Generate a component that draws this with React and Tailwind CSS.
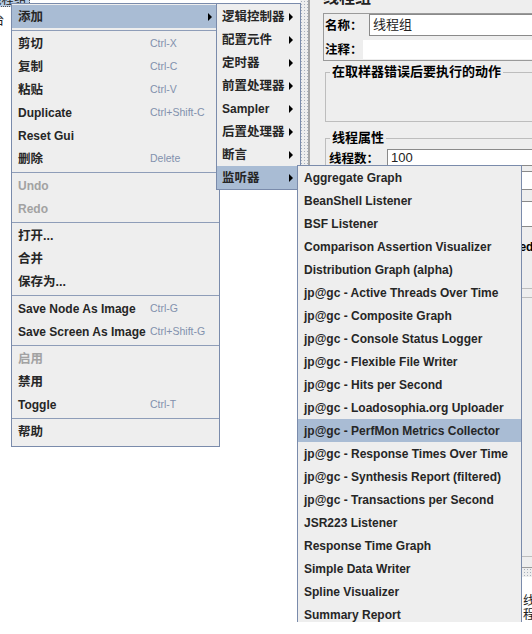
import clsx from "clsx";

const CJK = /[\u4e00-\u9fff]/;

const mainItems = [
  { label: "添加", arrow: true, active: true },
  "sep",
  { label: "剪切", shortcut: "Ctrl-X" },
  { label: "复制", shortcut: "Ctrl-C" },
  { label: "粘贴", shortcut: "Ctrl-V" },
  { label: "Duplicate", shortcut: "Ctrl+Shift-C" },
  { label: "Reset Gui" },
  { label: "删除", shortcut: "Delete" },
  "sep",
  { label: "Undo", disabled: true },
  { label: "Redo", disabled: true },
  "sep",
  { label: "打开..." },
  { label: "合并" },
  { label: "保存为..." },
  "sep",
  { label: "Save Node As Image", shortcut: "Ctrl-G" },
  { label: "Save Screen As Image", shortcut: "Ctrl+Shift-G" },
  "sep",
  { label: "启用", disabled: true },
  { label: "禁用" },
  { label: "Toggle", shortcut: "Ctrl-T" },
  "sep",
  { label: "帮助" },
];

const addItems = [
  "逻辑控制器",
  "配置元件",
  "定时器",
  "前置处理器",
  "Sampler",
  "后置处理器",
  "断言",
  "监听器",
];

const listeners = [
  "Aggregate Graph",
  "BeanShell Listener",
  "BSF Listener",
  "Comparison Assertion Visualizer",
  "Distribution Graph (alpha)",
  "jp@gc - Active Threads Over Time",
  "jp@gc - Composite Graph",
  "jp@gc - Console Status Logger",
  "jp@gc - Flexible File Writer",
  "jp@gc - Hits per Second",
  "jp@gc - Loadosophia.org Uploader",
  "jp@gc - PerfMon Metrics Collector",
  "jp@gc - Response Times Over Time",
  "jp@gc - Synthesis Report (filtered)",
  "jp@gc - Transactions per Second",
  "JSR223 Listener",
  "Response Time Graph",
  "Simple Data Writer",
  "Spline Visualizer",
  "Summary Report",
];

// small black triangle used for submenu arrows
const Arrow = () => (
  <span className="h-0 w-0 border-y-[4px] border-l-[4px] border-y-transparent border-l-black" />
);

// chinese labels sit a touch lower and a bit larger than the latin ones
const labelSize = (text) =>
  CJK.test(text) ? "relative top-px text-[12.5px]" : "text-[12px]";

const Separator = () => (
  <div className="flex h-[4px] items-center">
    <div className="h-px w-full bg-[#8e9db8]" />
  </div>
);

const MainMenu = () => (
  <div className="absolute left-[11px] top-[3px] w-[209px] border border-[#7a8bab] bg-[#eeeeee] pb-[3px] pt-px">
    {mainItems.map((item, i) =>
      item === "sep" ? (
        <Separator key={i} />
      ) : (
        <div
          key={i}
          className={clsx(
            "flex h-[23px] items-center pl-[6px] pr-[7px]",
            item.active && "bg-[#a9bcd4]"
          )}
        >
          <span
            className={clsx(
              "w-[132px] shrink-0 whitespace-nowrap font-bold",
              labelSize(item.label),
              item.disabled ? "text-[#a2a2a2]" : "text-[#262626]"
            )}
          >
            {item.label}
          </span>
          {item.shortcut && (
            <span className="whitespace-nowrap text-[10.5px] text-[#8291ad]">
              {item.shortcut}
            </span>
          )}
          {item.arrow && (
            <span className="ml-auto flex">
              <Arrow />
            </span>
          )}
        </div>
      )
    )}
  </div>
);

const AddMenu = () => (
  <div className="absolute left-[216px] top-[3px] w-[85px] border border-[#7a8bab] bg-[#eeeeee] pt-px">
    {addItems.map((label) => (
      <div
        key={label}
        className={clsx(
          "flex h-[23px] items-center pl-[5px] pr-[7px]",
          label === "监听器" && "bg-[#a9bcd4]"
        )}
      >
        <span
          className={clsx(
            "whitespace-nowrap font-bold text-[#262626]",
            labelSize(label)
          )}
        >
          {label}
        </span>
        <span className="ml-auto flex">
          <Arrow />
        </span>
      </div>
    ))}
  </div>
);

const ListenerMenu = () => (
  <div className="absolute left-[297px] top-[165px] w-[225px] border border-[#7a8bab] bg-[#eeeeee]">
    {listeners.map((label) => (
      <div
        key={label}
        className={clsx(
          "flex h-[23px] items-center pl-[6px]",
          label === "jp@gc - PerfMon Metrics Collector" && "bg-[#a9bcd4]"
        )}
      >
        <span className="whitespace-nowrap text-[12px] font-bold text-[#262626]">
          {label}
        </span>
      </div>
    ))}
  </div>
);

const Field = ({ className, children }) => (
  <div
    className={clsx(
      "flex flex-1 items-center border border-[#8a8a8a] bg-white pl-[3px] text-[13px] text-[#222]",
      className
    )}
  >
    {children}
  </div>
);

const ThreadGroupPanel = () => (
  <div className="flex flex-1 flex-col overflow-hidden bg-[#eeeeee]">
    <div className="h-[572px] pl-[13px]">
      <div className="-mt-[12px] h-[25px] text-[16px] font-bold leading-[20px] text-[#222]">
        线程组
      </div>

      {/* name / comment */}
      <div className="h-[48px] w-[260px] border border-[#9a9a9a]">
        <div className="flex h-[22px] items-center">
          <span className="w-[45px] pl-px pt-[3px] text-[12.5px] font-bold">名称：</span>
          <Field className="h-[22px] -mt-px">线程组</Field>
        </div>
        <div className="mt-[4px] flex h-[19px] items-center">
          <span className="w-[39px] pl-px pt-[2px] text-[12.5px] font-bold">注释：</span>
          <div className="h-[19px] flex-1 bg-white" />
        </div>
      </div>

      {/* on sampler error */}
      <div className="relative ml-[2px] mt-[11px] h-[50px] w-[260px] border border-[#bdbdbd]">
        <span className="absolute -top-[10px] left-[4px] bg-[#eeeeee] px-[2px] text-[13px] font-bold leading-[18px]">
          在取样器错误后要执行的动作
        </span>
      </div>

      {/* thread properties */}
      <div className="relative ml-[2px] mt-[16px] w-[260px] border border-[#bdbdbd] pb-[10px] pl-[3px] pt-[10px]">
        <span className="absolute -top-[10px] left-[4px] bg-[#eeeeee] px-[2px] text-[13px] font-bold leading-[18px]">
          线程属性
        </span>
        <div className="flex h-[17px] items-center">
          <span className="w-[58px] pt-[3px] text-[12.5px] font-bold">线程数：</span>
          <Field className="h-[17px]">100</Field>
        </div>
        <div className="mt-[5px] flex h-[19px] items-center">
          <span className="w-[120px]" />
          <Field className="h-[19px]" />
        </div>
        <div className="mt-[11px] flex h-[26px] items-center">
          <span className="w-[120px]" />
          <Field className="h-[26px]" />
        </div>
        <div className="mt-[11px] whitespace-nowrap pl-[5px] text-[12px] font-bold">
          Delay Thread creation until needed
        </div>
        <div className="h-[22px]" />
      </div>

      <div className="ml-[2px] mt-[8px] h-[260px] w-[260px] border border-[#bdbdbd]" />
    </div>
    <div className="h-[10px] border-t border-[#9a9a9a] bg-[#eeeeee] bg-[radial-gradient(#a8b0bc_0.8px,transparent_0.8px)] bg-[length:3px_3px]" />
    <div className="flex-1 bg-white pl-[213px] pt-[17px] text-[12.5px] leading-[14px] text-[#222]">
      线程
    </div>
  </div>
);

export default function App() {
  return (
    <div className="relative h-[634px] w-[532px] overflow-hidden bg-white font-['Liberation_Sans','Noto_Sans_CJK_SC',sans-serif]">
      <div className="relative h-[622px] overflow-hidden">
        <div className="flex h-full">
          {/* tree */}
          <div className="relative w-[300px] bg-white">
            <div className="absolute -left-[14px] -top-[7px] border border-dotted border-[#555] bg-[#b8cce4] px-[2px] text-[12.5px] leading-[12px] text-[#222]">
              线程组
            </div>
            <div className="absolute -left-[8px] top-[12px] text-[12.5px] text-[#222]">
              台
            </div>
          </div>
          {/* splitter */}
          <div className="w-[8px] bg-[#eeeeee] bg-[radial-gradient(#a8b0bc_0.8px,transparent_0.8px)] bg-[length:3px_3px]" />
          <div className="w-[2px] bg-[#a6a6a6]" />
          <ThreadGroupPanel />
        </div>

        <MainMenu />
        <AddMenu />
        <ListenerMenu />
      </div>
    </div>
  );
}
